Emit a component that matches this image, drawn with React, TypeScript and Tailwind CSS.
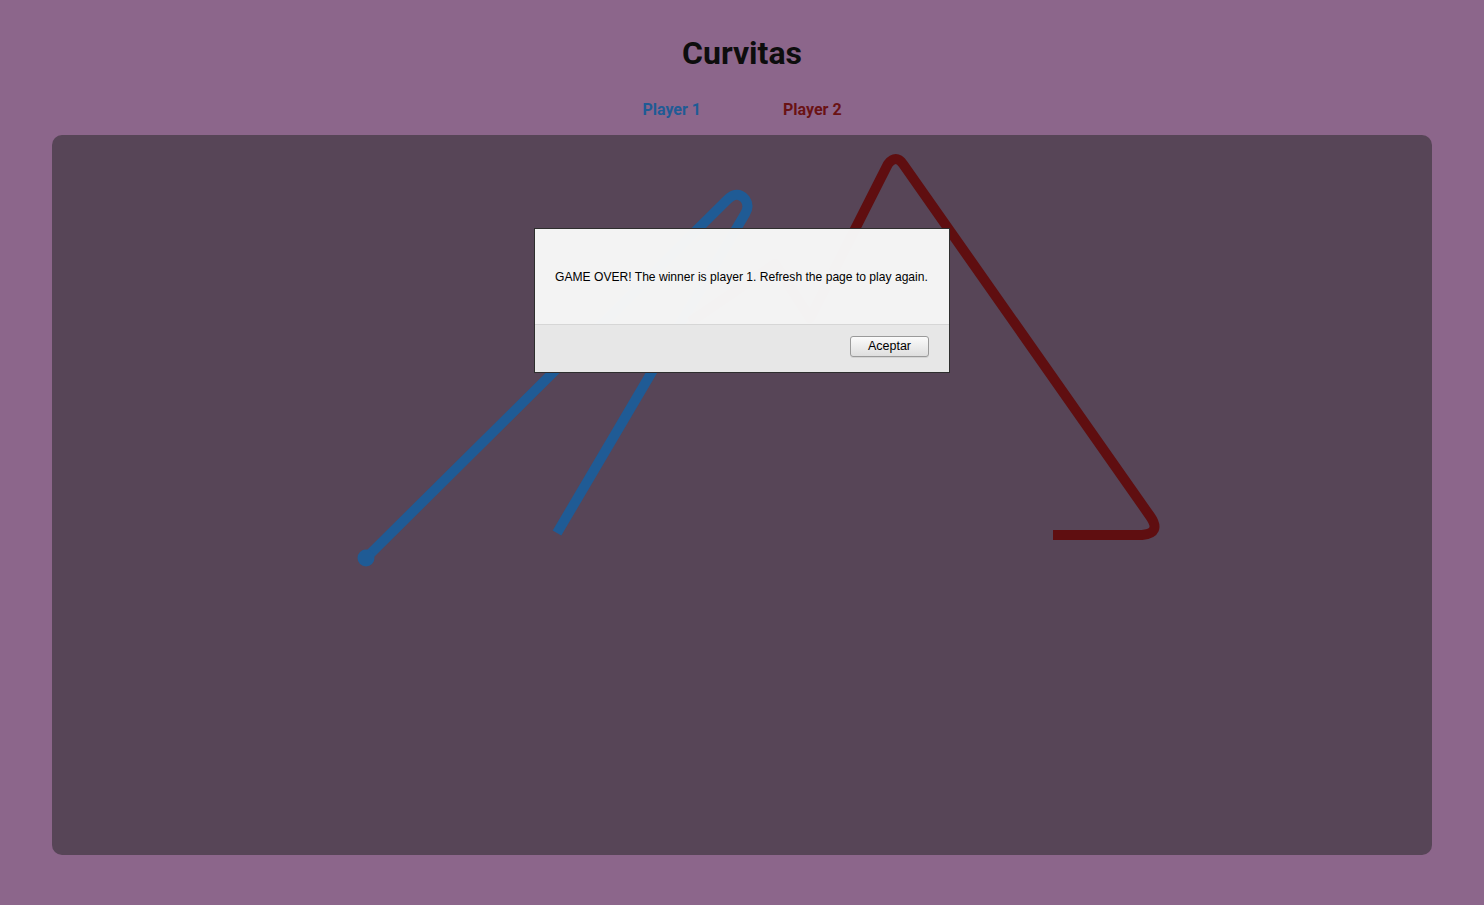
export default function App() {
  return (
    <div className="min-h-[905px] bg-[#8c668b] flex flex-col items-center font-['Roboto',sans-serif]">
      <h1 className="mt-[34px] text-[32px] leading-[38px] font-bold text-[#0d0d0d]">Curvitas</h1>

      <div className="mt-[28px] flex gap-[82px] text-[16px] leading-[20px] font-bold">
        <span className="text-[#1f5b95]">Player 1</span>
        <span className="text-[#6a1214]">Player 2</span>
      </div>

      <div className="mt-[15px] relative w-[1380px] h-[720px] rounded-[10px] bg-[#574557]">
        {/* trails, coordinates relative to the board */}
        <svg className="absolute inset-0" width="1380" height="720" viewBox="52 135 1380 720">
          <path
            d="M366 558 L727 200 Q737 190 745 199 Q750 206 745 214 L557 533"
            fill="none"
            stroke="#1f5b95"
            strokeWidth="10"
            strokeLinejoin="round"
          />
          <circle cx="366" cy="558" r="8.5" fill="#1f5b95" />
          <path
            d="M1053 535 L1142 535 Q1162 533 1150 516 L903 164 Q896 154 888 164 L810 318 L775 264 L690 322"
            fill="none"
            stroke="#5f0e10"
            strokeWidth="10"
            strokeLinejoin="round"
          />
        </svg>

        {/* game over alert */}
        <div className="absolute left-[482px] top-[93px] w-[416px] border border-[#2e2e2e] bg-[#f6f6f6]/[0.985] font-['Liberation_Sans',Arial,sans-serif] text-black">
          <div className="h-[95px] flex items-center pl-[20px] text-[12.1px] leading-[16px] whitespace-nowrap">
            GAME OVER! The winner is player 1. Refresh the page to play again.
          </div>
          <div className="h-[48px] border-t border-[#d6d6d6] bg-[#e7e7e7]/[0.985] flex justify-end items-start pt-[11px] pr-[20px]">
            <button className="w-[79px] h-[21px] rounded-[3px] border border-[#9a9a9a] bg-gradient-to-b from-[#fbfbfb] to-[#dedede] text-[12.5px] leading-[19px] text-black shadow-[0_1px_0_rgba(0,0,0,0.08)]">
              Aceptar
            </button>
          </div>
        </div>
      </div>
    </div>
  );
}
